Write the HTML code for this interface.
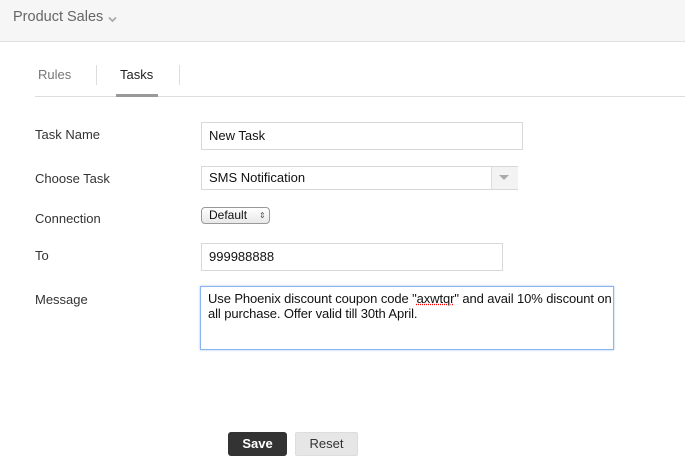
<!DOCTYPE html>
<html><head><style>
body{margin:0;width:685px;height:465px;background:#fff;font-family:"Liberation Sans",Arial,sans-serif;position:relative;overflow:hidden}
.a{position:absolute}
.lbl{font-size:13px;color:#333;left:35px}
.inp{border:1px solid #d8d8d8;box-sizing:border-box;font-size:13px;color:#111;padding-left:7px;background:#fff}
</style></head><body>
<div class="a" style="left:0;top:0;width:685px;height:41px;background:#f6f6f6;border-bottom:1px solid #e2e2e2"></div>
<div class="a" style="left:13px;top:9px;font-size:14.5px;color:#666;white-space:nowrap">Product Sales</div>
<svg class="a" style="left:108px;top:16px" width="9" height="7"><path d="M1 1.5 L4.5 5 L8 1.5" stroke="#aaa" stroke-width="1.8" fill="none"/></svg>
<div class="a" style="left:38px;top:67px;font-size:13px;color:#777">Rules</div>
<div class="a" style="left:96px;top:65px;width:1px;height:20px;background:#ddd"></div>
<div class="a" style="left:120px;top:67px;font-size:13px;color:#222">Tasks</div>
<div class="a" style="left:179px;top:65px;width:1px;height:20px;background:#ddd"></div>
<div class="a" style="left:35px;top:96px;width:650px;height:1px;background:#ddd"></div>
<div class="a" style="left:116px;top:94px;width:42px;height:3px;background:#999"></div>

<div class="a lbl" style="top:127px">Task Name</div>
<div class="a inp" style="left:201px;top:122px;width:322px;height:28px;line-height:26px">New Task</div>
<div class="a lbl" style="top:171px">Choose Task</div>
<div class="a inp" style="left:201px;top:166px;width:317px;height:24px;line-height:22px">SMS Notification</div>
<div class="a" style="left:491px;top:167px;width:26px;height:22px;background:#f3f3f3;border-left:1px solid #ddd"></div>
<svg class="a" style="left:499px;top:175px" width="10" height="6"><path d="M0 0 L10 0 L5 5Z" fill="#aaa"/></svg>
<div class="a lbl" style="top:211px">Connection</div>
<div class="a" style="left:201px;top:207px;width:69px;height:17px;box-sizing:border-box;border:1px solid #999;border-radius:4px;background:linear-gradient(#fff,#e8e8e8);font-size:12px;line-height:15px;padding-left:7px;color:#111">Default<span style="position:absolute;left:57px;top:0;font-size:8px;color:#555">&#8661;</span></div>
<div class="a lbl" style="top:248px">To</div>
<div class="a inp" style="left:201px;top:243px;width:302px;height:28px;line-height:26px">999988888</div>
<div class="a lbl" style="top:292px">Message</div>
<div class="a" style="left:200px;top:286px;width:414px;height:64px;box-sizing:border-box;border:1px solid #8ab4f0;box-shadow:0 0 2px #9cc3f5;font-size:13px;line-height:15px;padding:4px 0 4px 7px;color:#111;letter-spacing:-0.1px">Use Phoenix discount coupon code "<span style="text-decoration:underline dotted red">axwtqr</span>" and avail 10% discount on all purchase. Offer valid till 30th April.</div>
<div class="a" style="left:228px;top:432px;width:59px;height:24px;background:#333;border-radius:3px;color:#fff;font-weight:bold;font-size:13px;text-align:center;line-height:24px">Save</div>
<div class="a" style="left:295px;top:432px;width:63px;height:24px;background:#e6e6e6;border:1px solid #ddd;box-sizing:border-box;border-radius:2px;color:#333;font-size:13px;text-align:center;line-height:22px">Reset</div>
</body></html>
